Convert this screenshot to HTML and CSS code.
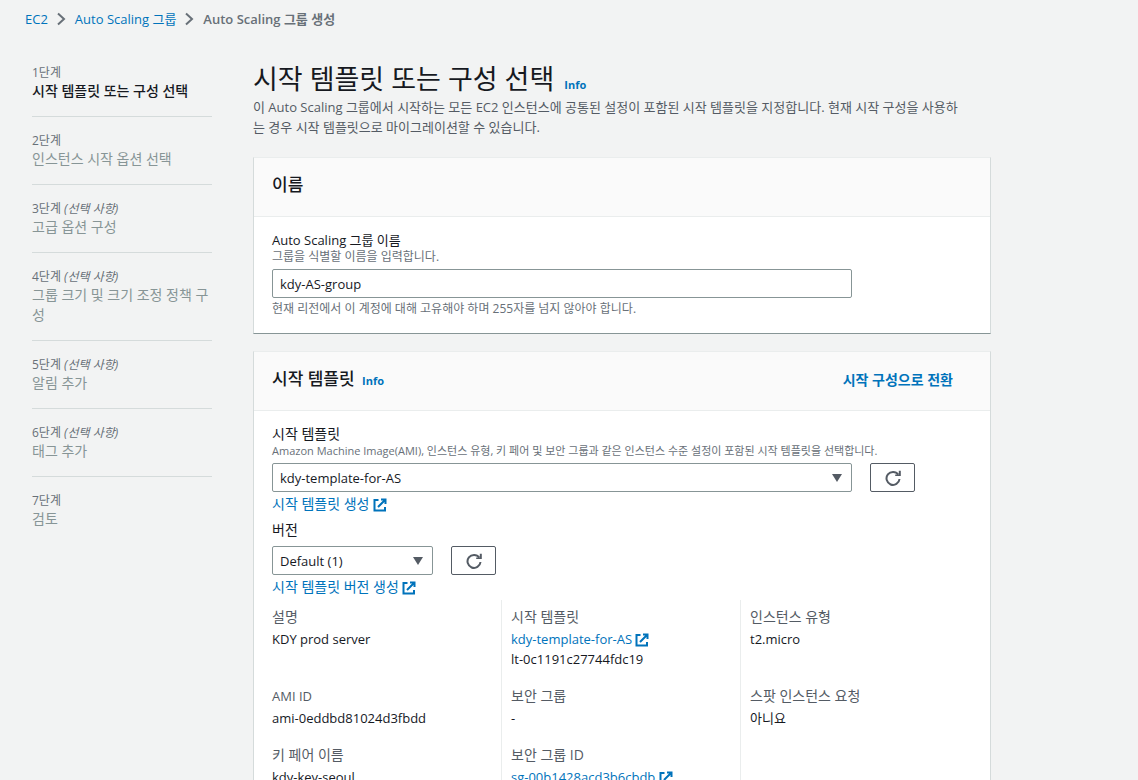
FILE: index.html
```html
<!DOCTYPE html>
<html lang="ko">
<head>
  <meta charset="UTF-8">
  <meta name="viewport" content="width=device-width, initial-scale=1.0">
  <title>Auto Scaling 그룹 생성</title>
  <link rel="stylesheet" href="styles.css">
</head>
<body>
  <svg class="sprite" aria-hidden="true">
    <symbol id="chevron" viewBox="0 0 9 14">
      <path d="M1 1.500l6 5.500L1 12.500" fill="none" stroke="currentColor" stroke-width="2"/>
    </symbol>
    <symbol id="external" viewBox="0 0 14 14">
      <path d="M5.500 2H1.500v10.500h10.500V9M8 1.500h4.500V6M12 2L5 9" fill="none" stroke="currentColor" stroke-width="2"/>
    </symbol>
    <symbol id="refresh" viewBox="0 0 16 16">
      <path d="M14.500 9A6.500 6.500 0 1 1 13.300 4.600" fill="none" stroke="currentColor" stroke-width="2"/>
      <path d="M15.800 .8v5.200h-5.600V4.400h3.600V.8z" fill="currentColor"/>
    </symbol>
  </svg>

  <div class="page">
    <nav class="breadcrumb" aria-label="breadcrumb">
      <a href="#">EC2</a>
      <svg class="chevron"><use href="#chevron"/></svg>
      <a href="#">Auto Scaling 그룹</a>
      <svg class="chevron"><use href="#chevron"/></svg>
      <span class="current">Auto Scaling 그룹 생성</span>
    </nav>

    <div class="wizard">
      <ol class="steps">
        <li class="step active"><div class="step-no">1단계</div><div class="step-title">시작 템플릿 또는 구성 선택</div></li>
        <li class="step"><div class="step-no">2단계</div><div class="step-title">인스턴스 시작 옵션 선택</div></li>
        <li class="step"><div class="step-no">3단계 <i>(선택 사항)</i></div><div class="step-title">고급 옵션 구성</div></li>
        <li class="step"><div class="step-no">4단계 <i>(선택 사항)</i></div><div class="step-title">그룹 크기 및 크기 조정 정책 구성</div></li>
        <li class="step"><div class="step-no">5단계 <i>(선택 사항)</i></div><div class="step-title">알림 추가</div></li>
        <li class="step"><div class="step-no">6단계 <i>(선택 사항)</i></div><div class="step-title">태그 추가</div></li>
        <li class="step"><div class="step-no">7단계</div><div class="step-title">검토</div></li>
      </ol>

      <main class="content">
        <header class="intro">
          <h1>시작 템플릿 또는 구성 선택 <a class="info" href="#">Info</a></h1>
          <p>이 Auto Scaling 그룹에서 시작하는 모든 EC2 인스턴스에 공통된 설정이 포함된 시작 템플릿을 지정합니다. 현재 시작 구성을 사용하는 경우 시작 템플릿으로 마이그레이션할 수 있습니다.</p>
        </header>

        <section class="panel">
          <div class="panel-header">
            <h2>이름</h2>
          </div>
          <div class="panel-body">
            <label class="label" for="group-name">Auto Scaling 그룹 이름</label>
            <div class="hint">그룹을 식별할 이름을 입력합니다.</div>
            <div class="row"><input class="control" type="text" id="group-name" value="kdy-AS-group"></div>
            <div class="hint below">현재 리전에서 이 계정에 대해 고유해야 하며 255자를 넘지 않아야 합니다.</div>
          </div>
        </section>

        <section class="panel">
          <div class="panel-header">
            <h2>시작 템플릿 <a class="info" href="#">Info</a></h2>
            <button class="switch" type="button">시작 구성으로 전환</button>
          </div>
          <div class="panel-body">
            <label class="label ko" for="template">시작 템플릿</label>
            <div class="hint long">Amazon Machine Image(AMI), 인스턴스 유형, 키 페어 및 보안 그룹과 같은 인스턴스 수준 설정이 포함된 시작 템플릿을 선택합니다.</div>
            <div class="row">
              <div class="select">
                <select class="control" id="template"><option>kdy-template-for-AS</option></select>
              </div>
              <button class="refresh" type="button" aria-label="새로 고침"><svg><use href="#refresh"/></svg></button>
            </div>
            <a class="create ko" href="#">시작 템플릿 생성 <svg class="ext"><use href="#external"/></svg></a>

            <label class="label version ko" for="version">버전</label>
            <div class="row">
              <div class="select short">
                <select class="control" id="version"><option>Default (1)</option></select>
              </div>
              <button class="refresh" type="button" aria-label="새로 고침"><svg><use href="#refresh"/></svg></button>
            </div>
            <a class="create ko" href="#">시작 템플릿 버전 생성 <svg class="ext"><use href="#external"/></svg></a>

            <dl class="details">
              <div><dt>설명</dt><dd>KDY prod server</dd></div>
              <div><dt>시작 템플릿</dt><dd><a href="#">kdy-template-for-AS <svg class="ext"><use href="#external"/></svg></a></dd><dd>lt-0c1191c27744fdc19</dd></div>
              <div><dt>인스턴스 유형</dt><dd>t2.micro</dd></div>
              <div><dt class="latin">AMI ID</dt><dd>ami-0eddbd81024d3fbdd</dd></div>
              <div><dt>보안 그룹</dt><dd>-</dd></div>
              <div><dt>스팟 인스턴스 요청</dt><dd>아니요</dd></div>
              <div><dt>키 페어 이름</dt><dd>kdy-key-seoul</dd></div>
              <div><dt>보안 그룹 ID</dt><dd><a href="#">sg-00b1428acd3b6cbdb <svg class="ext"><use href="#external"/></svg></a></dd></div>
              <div></div>
            </dl>
          </div>
        </section>
      </main>
    </div>
  </div>
</body>
</html>
```
FILE: styles.css
```css
* {
  box-sizing: border-box;
}
body {
  margin: 0;
  background: #f2f3f3;
  color: #16191f;
  font-family: "Open Sans", "Noto Sans CJK KR", sans-serif;
  font-size: 13px;
  line-height: 20px;
}
a {
  color: #0073bb;
  text-decoration: none;
}
h1, h2, p, ol, dl, dd {
  margin: 0;
  padding: 0;
  font-weight: 400;
}
input, select, button {
  font-family: inherit;
  font-size: 13px;
}
.sprite {
  display: none;
}
.page {
  height: 100vh;
  overflow: hidden;
}
.breadcrumb {
  display: flex;
  align-items: center;
  gap: 9px;
  padding: 9px 25px 0;
}
.chevron {
  width: 9px;
  height: 14px;
  color: #687078;
}
.current {
  color: #687078;
  font-weight: 600;
}
.wizard {
  display: grid;
  grid-template-columns: 180px minmax(0, 738px);
  gap: 41px;
  padding: 31px 32px 0;
}

/* steps */
.steps {
  list-style: none;
  padding-top: 4px;
}
.step {
  padding-bottom: 15px;
  margin-bottom: 15px;
  border-bottom: 1px solid #d5dbdb;
}
.step:last-child {
  border-bottom: 0;
}
.step-no {
  color: #687078;
  font-size: 12px;
  line-height: 17px;
}
.step-title {
  color: #879596;
  font-size: 14px;
}
.active .step-title {
  color: #16191f;
  font-weight: 500;
}

/* intro */
.intro {
  padding-bottom: 20px;
}
h1 {
  font-size: 27px;
  line-height: 37px;
}
.intro p {
  padding-right: 28px;
  color: #545b64;
}
.info {
  margin-left: 3px;
  font-size: 11px;
  font-weight: 700;
  line-height: 11px;
}

/* panels */
.panel {
  margin-bottom: 17px;
  background: #fff;
  border: 1px solid #d5dbdb;
  border-top-color: #eaeded;
  border-bottom-color: #879596;
}
.panel-header {
  display: flex;
  justify-content: space-between;
  align-items: center;
  height: 59px;
  padding: 0 37px 4px 18px;
  background: #fafafa;
  border-bottom: 1px solid #eaeded;
}
h2 {
  font-size: 17px;
  font-weight: 500;
}
.switch {
  padding: 0;
  border: 0;
  background: none;
  color: #0073bb;
  font-size: 14px;
  font-weight: 700;
}
.panel-body {
  padding: 13px 18px 17px;
}
.label {
  display: block;
}
.ko, dt {
  font-size: 14px;
}
.hint {
  color: #687078;
  font-size: 12px;
  line-height: 14px;
  margin-bottom: 5px;
}
.long {
  font-size: 11px;
}
.below {
  margin: 4px 0 0;
}
.row {
  display: flex;
  gap: 18px;
}
.control {
  width: 580px;
  height: 29px;
  padding: 0 7px;
  border: 1px solid #879596;
  border-radius: 2px;
  background: #fff;
  color: #16191f;
  appearance: none;
}
.select {
  position: relative;
}
.select::after {
  content: "";
  position: absolute;
  right: 10px;
  top: 11px;
  border: 5px solid transparent;
  border-top: 8px solid #545b64;
  border-bottom: 0;
  pointer-events: none;
}
.short .control {
  width: 161px;
}
.refresh {
  display: grid;
  place-items: center;
  width: 45px;
  height: 29px;
  padding: 0;
  border: 1px solid #545b64;
  border-radius: 2px;
  background: #fff;
  color: #545b64;
}
.refresh svg {
  width: 16px;
  height: 16px;
}
.create {
  display: block;
  margin-top: 2px;
}
.ext {
  width: 14px;
  height: 14px;
  vertical-align: -3px;
}
.version {
  margin: 6px 0;
}

/* template details */
.details {
  display: grid;
  grid-template-columns: 229px 239px 1fr;
  margin-top: 3px;
}
.details > div {
  padding: 7px 0 10px 9px;
  border-left: 1px solid #eaeded;
}
.details > div:nth-child(3n + 1) {
  padding-left: 0;
  border-left: 0;
}
dt {
  margin-bottom: 2px;
  color: #545b64;
}
.latin {
  font-size: 13px;
}
```
